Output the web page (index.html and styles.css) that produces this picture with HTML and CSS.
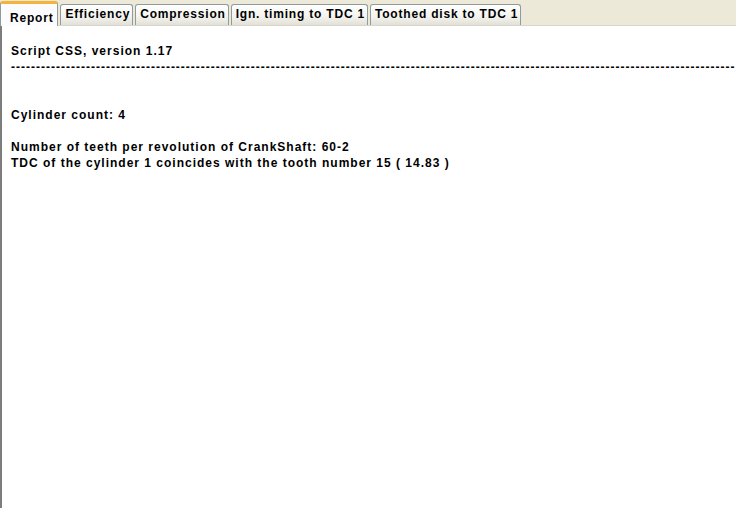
FILE: index.html
```html
<!DOCTYPE html>
<html>
<head>
<meta charset="utf-8">
<link rel="stylesheet" href="styles.css">
</head>
<body>
<div class="window">
  <div class="tabs">
    <div class="tab active">Report</div>
    <div class="tab">Efficiency</div>
    <div class="tab">Compression</div>
    <div class="tab">Ign. timing to TDC 1</div>
    <div class="tab">Toothed disk to TDC 1</div>
  </div>
  <div class="panel">
    <div class="report">
      <div class="line">Script CSS, version 1.17</div>
      <div class="line dashes">-------------------------------------------------------------------------------------------------------------------------------------------------</div>
      <div class="line">&nbsp;</div>
      <div class="line">&nbsp;</div>
      <div class="line">Cylinder count: 4</div>
      <div class="line">&nbsp;</div>
      <div class="line">Number of teeth per revolution of CrankShaft: 60-2</div>
      <div class="line">TDC of the cylinder 1 coincides with the tooth number 15 ( 14.83 )</div>
    </div>
  </div>
</div>
</body>
</html>
```
FILE: styles.css
```css
html, body {
  margin: 0;
  padding: 0;
  width: 736px;
  height: 508px;
  overflow: hidden;
  background: #ECE9D8;
  font-family: "Liberation Sans", Arial, sans-serif;
  font-size: 12px;
  font-weight: bold;
  letter-spacing: 1px;
  color: #000;
}
.window {
  display: flex;
  flex-direction: column;
  height: 508px;
}
.tabs {
  display: flex;
  align-items: flex-end;
  height: 25px;
  gap: 2px;
  background: #ECE9D8;
  position: relative;
  z-index: 1;
  letter-spacing: 0.8px;
}
.tab {
  height: 20px;
  line-height: 19px;
  padding: 0 2px 0 4px;
  border: 1px solid #919B9C;
  border-bottom: none;
  border-radius: 3px 3px 0 0;
  background: linear-gradient(#FFFFFF, #F3F3EF 60%, #E2E0D6);
  white-space: nowrap;
}
.tab.active {
  height: 25px;
  line-height: 28px;
  padding: 0 4px 0 9px;
  background: #FCFCFE;
  border-top: 3px solid #F5B33A;
  margin-bottom: -1px;
  box-sizing: border-box;
}
.panel {
  flex: 1;
  background: #FFFFFF;
  border-left: 2px solid #7D7D7D;
  border-top: 1px solid #D8D6CC;
  padding: 17px 0 0 9px;
  overflow: hidden;
}
.line {
  height: 16px;
  line-height: 16px;
  white-space: nowrap;
}
.dashes {
  overflow: hidden;
}
```
